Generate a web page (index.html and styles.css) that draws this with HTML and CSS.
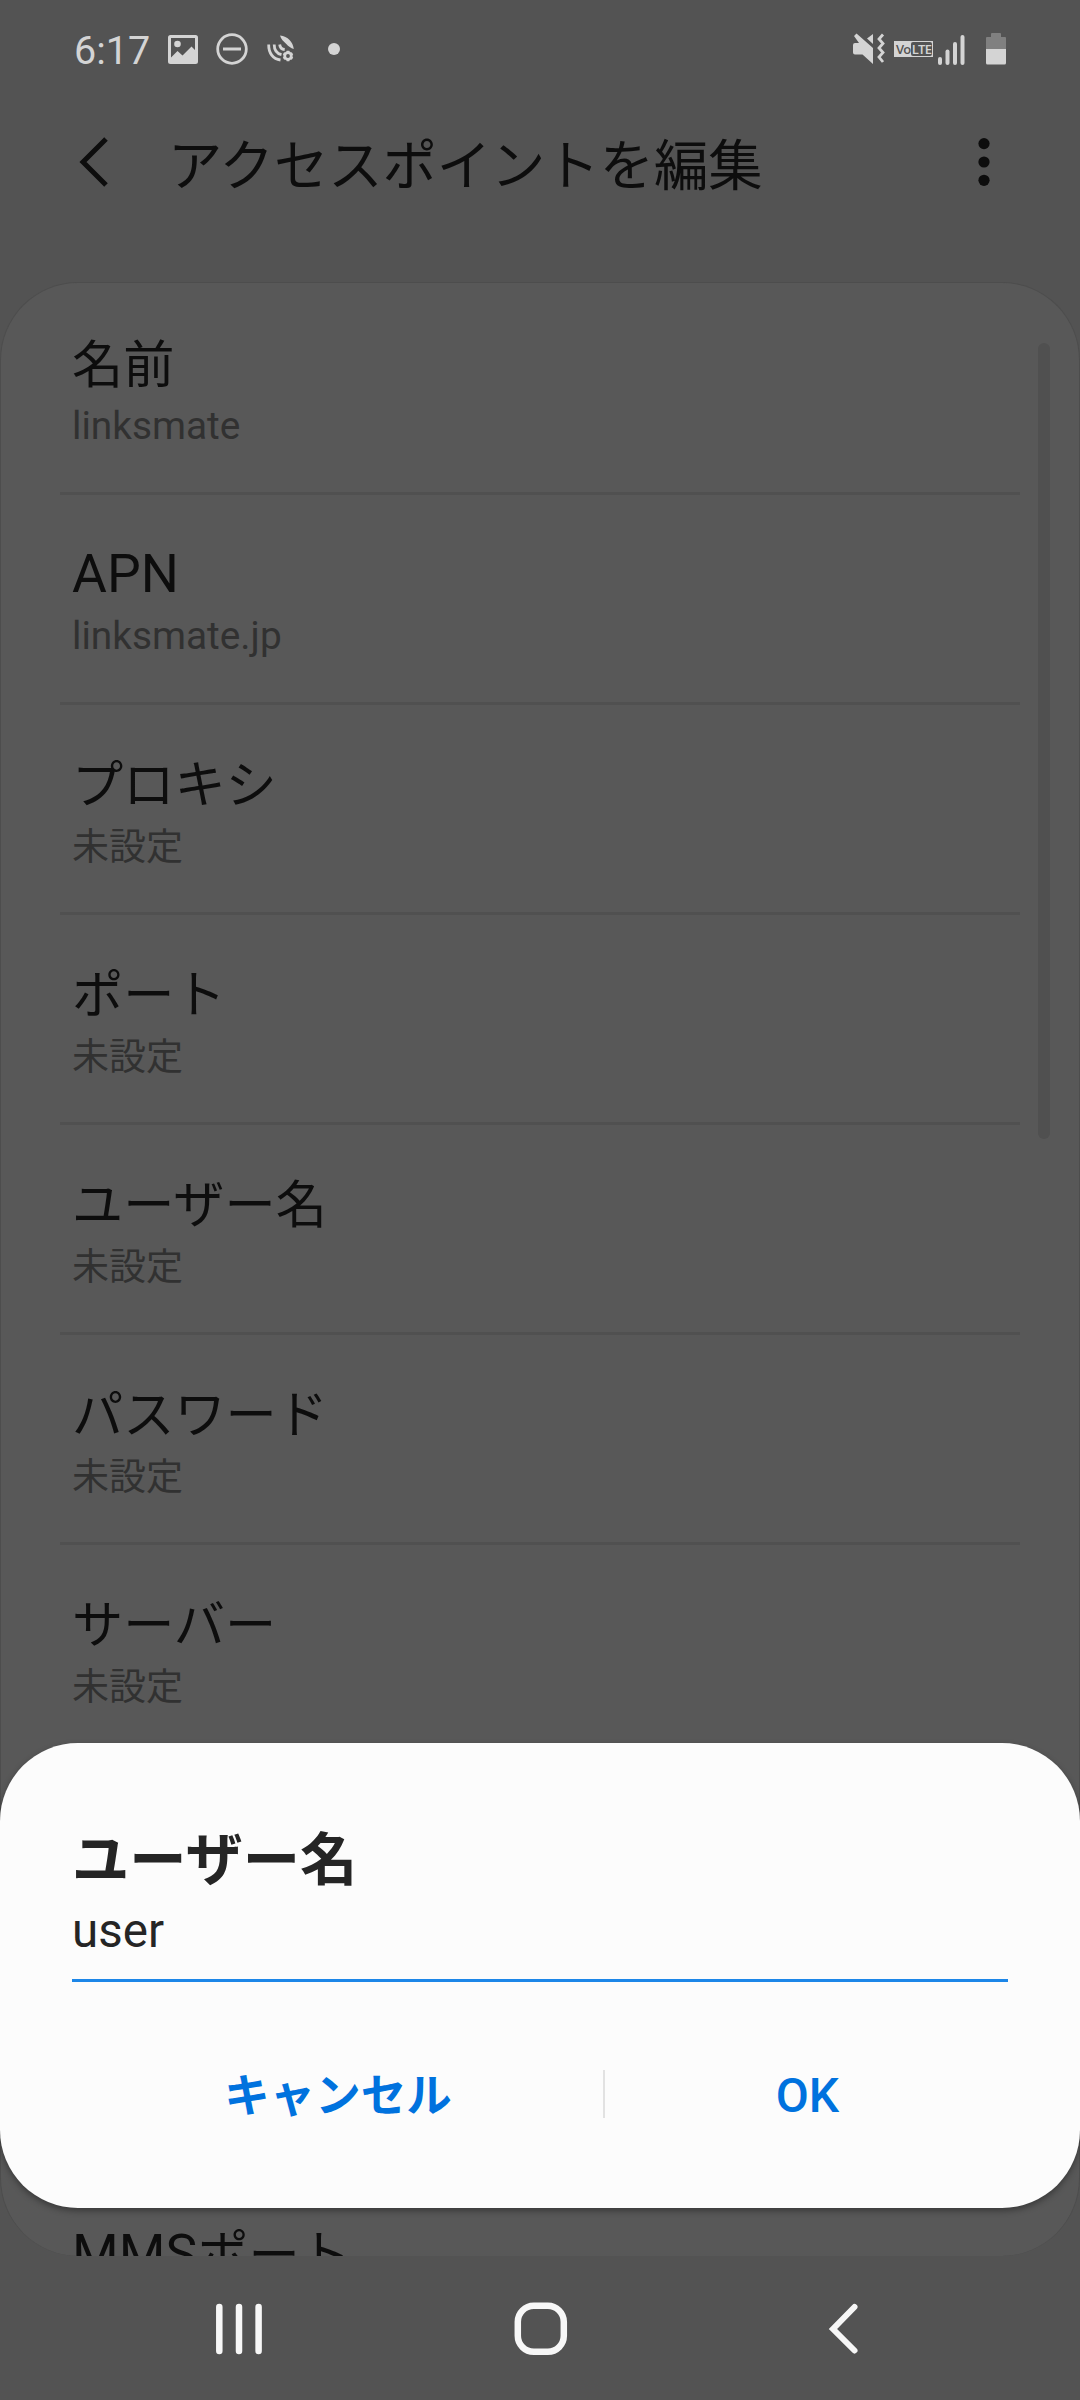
FILE: index.html
```html
<!DOCTYPE html>
<html lang="ja">
<head>
<meta charset="utf-8">
<title>アクセスポイントを編集</title>
<link rel="stylesheet" href="styles.css">
</head>
<body>
<div class="phone">
  <div class="status">
    <div class="status-left">
      <span class="clock">6:17</span>
      <svg class="ic-picture" width="30" height="30" viewBox="0 0 30 30"><path fill-rule="evenodd" d="M2.500 0h25A2.500 2.500 0 0 1 30 2.500v24a2.500 2.500 0 0 1-2.500 2.500h-25A2.500 2.500 0 0 1 0 26.500v-24A2.500 2.500 0 0 1 2.500 0zM3 3v19.500l6.500-6.500 5 4.500 9-9L27 15V3z"/><circle cx="9.500" cy="9" r="3.300"/></svg>
      <svg class="ic-dnd" width="32" height="32" viewBox="0 0 32 32"><circle class="line" cx="16" cy="16" r="14.300"/><path d="M7 14.500h18v3H7z"/></svg>
      <svg class="ic-sync" width="28" height="28" viewBox="0 0 28 28"><path d="M13 .5C21 1.500 26 7 26.800 14c-3-1-5.300-2.400-7.500-5C16.500 6.500 14 4 13 .5z"/><path class="line" d="M1.700 9.500C1.500 18 6 24 13.500 25M7.200 9.500c0 6 2.500 9 7.300 10.200M12.700 9.500c.3 3.300 1.700 4.700 5 5"/><circle class="line" cx="21" cy="21" r="3.300"/><path class="line" d="M21 15.800v2M21 24.200v2M16.500 18.400l1.700 1M23.800 22.600l1.700 1M16.500 23.600l1.700-1M23.800 19.400l1.700-1"/></svg>
      <i class="more-dot"></i>
    </div>
    <div class="status-right">
      <svg class="ic-mute" width="32" height="32" viewBox="0 0 32 32"><path d="M0 12q0-2 2-2h4L1 3l2.500-2.500L20 15v16L9.500 21.500H2q-2 0-2-2zM20 1v10l-6-5.500z"/><path class="line" d="M30 1.500l-4 4.500 4 4.500-4 4.500 4 4.500-4 4.500 4 5"/></svg>
      <div class="volte"><span>Vo</span><b>LTE</b></div>
      <svg class="ic-signal" width="28" height="30" viewBox="0 0 28 30"><rect x="0" y="22" width="4" height="8" rx="2"/><rect x="7.500" y="14.500" width="4" height="15.500" rx="2"/><rect x="15" y="7" width="4" height="23" rx="2"/><rect x="22.500" y="0" width="4" height="30" rx="2"/></svg>
      <svg class="ic-battery" width="20" height="32" viewBox="0 0 20 32"><path class="empty" d="M5 1q0-1 1-1h8q1 0 1 1v3h4q1 0 1 1v12H0V5q0-1 1-1h4z"/><path d="M0 16h20v14q0 1.500-1.500 1.500h-17Q0 31.500 0 30z"/></svg>
    </div>
  </div>

  <header class="appbar">
    <svg class="back" width="32" height="50" viewBox="0 0 32 50"><path d="M28 2L5 25l23 23"/></svg>
    <h1>アクセスポイントを編集</h1>
    <svg class="menu" width="12" height="50" viewBox="0 0 12 50"><circle cx="6" cy="6.600" r="5.600"/><circle cx="6" cy="25" r="5.600"/><circle cx="6" cy="43.300" r="5.600"/></svg>
  </header>

  <main class="card">
    <div class="row first"><div class="label"><span class="jp">名前</span></div><div class="value">linksmate</div></div>
    <div class="row"><div class="label">APN</div><div class="value">linksmate.jp</div></div>
    <div class="row"><div class="label"><span class="jp">プロキシ</span></div><div class="value"><span class="jp">未設定</span></div></div>
    <div class="row"><div class="label"><span class="jp">ポート</span></div><div class="value"><span class="jp">未設定</span></div></div>
    <div class="row"><div class="label"><span class="jp">ユーザー名</span></div><div class="value"><span class="jp">未設定</span></div></div>
    <div class="row"><div class="label"><span class="jp">パスワード</span></div><div class="value"><span class="jp">未設定</span></div></div>
    <div class="row"><div class="label"><span class="jp">サーバー</span></div><div class="value"><span class="jp">未設定</span></div></div>
    <div class="row"></div>
    <div class="row"></div>
    <div class="row"><div class="label">MMS<span class="jp">ポート</span></div></div>
    <div class="scrollbar"></div>
  </main>

  <nav class="navbar">
    <svg class="recents" width="48" height="52" viewBox="0 0 48 52"><path d="M4.300 4v44M24 4v44M43.600 4v44"/></svg>
    <svg class="home" width="54" height="54" viewBox="0 0 54 54"><rect x="3.800" y="3.800" width="46" height="46" rx="16"/></svg>
    <svg class="navback" width="32" height="54" viewBox="0 0 32 54"><path d="M27.500 5L6 27l21.500 21.500"/></svg>
  </nav>

  <section class="dialog">
    <h2>ユーザー名</h2>
    <div class="field">user</div>
    <div class="actions">
      <div class="btn cancel">キャンセル</div>
      <i class="sep"></i>
      <div class="btn ok">OK</div>
    </div>
  </section>
</div>
</body>
</html>
```
FILE: styles.css
```css
* { box-sizing: border-box; }
body {
  margin: 0;
  background: #535353;
  font-family: Roboto, "Noto Sans CJK JP", sans-serif;
}
svg { display: block; flex: none; }
h1, h2 { margin: 0; }

.phone {
  position: relative;
  display: flex;
  flex-direction: column;
  width: 1080px;
  height: 2400px;
  overflow: hidden;
  background: #535353;
}

/* status bar */
.status {
  display: flex;
  justify-content: space-between;
  height: 98px;
  padding: 0 74px 0 74px;
  color: #d4d4d4;
  fill: #d4d4d4;
}
.status-left, .status-right { display: flex; align-items: flex-start; }
.status .line { fill: none; stroke: #d4d4d4; stroke-width: 2.8; }
.clock { width: 94px; padding-top: 31px; font-size: 39.500px; line-height: 40px; }
.ic-picture { margin-top: 35px; }
.ic-dnd { margin: 33px 0 0 18px; }
.ic-sync { margin: 35px 0 0 19px; }
.more-dot { width: 12px; height: 12px; margin: 43px 0 0 33px; border-radius: 50%; background: #d4d4d4; }
.ic-mute { margin: 33px 9px 0 0; }
.volte {
  display: flex;
  width: 39px;
  height: 16px;
  margin: 41px 5px 0 0;
  padding: 1px;
  background: #d4d4d4;
  font: 600 13px/14px "Open Sans", sans-serif;
  letter-spacing: -0.8px;
}
.volte span { width: 16px; padding-left: 1px; color: #535353; }
.volte b { width: 21px; height: 14px; border-radius: 2px; background: #535353; font-weight: 600; text-align: center; }
.ic-signal { margin: 35px 20px 0 0; }
.ic-battery { margin-top: 33px; }
.ic-battery .empty { fill: #808080; }

/* title bar */
.appbar { display: flex; height: 184px; padding: 39px 90px 0 78px; }
.back path { fill: none; stroke: #0d0d0d; stroke-width: 5; }
.appbar h1 {
  flex: 1;
  padding: 3px 0 0 58px;
  color: #0d0d0d;
  font-size: 54.300px;
  font-weight: 400;
  line-height: 54px;
  white-space: nowrap;
}
.menu { fill: #0d0d0d; }

/* settings list */
.card {
  position: relative;
  height: 1974px;
  border: 1px solid #4d4d4d;
  border-bottom: 0;
  border-radius: 78px;
  background: #585858;
  overflow: hidden;
}
.row { position: relative; height: 210px; padding: 44px 72px 0 71px; }
.row.first { height: 212px; padding-top: 46px; }
.row::after {
  content: "";
  position: absolute;
  left: 59px;
  right: 59px;
  bottom: 0;
  height: 3px;
  background: #505050;
}
.label { height: 70px; color: #0d0d0d; font-size: 53.500px; line-height: 70px; white-space: nowrap; }
.value { height: 50px; margin-top: 2px; color: #313131; font-size: 38.800px; line-height: 50px; }
.jp { line-height: 1; }
.label .jp { font-size: 51.200px; vertical-align: -1px; }
.value .jp { font-size: 37px; vertical-align: -1px; }
.scrollbar {
  position: absolute;
  top: 60px;
  right: 29px;
  width: 12px;
  height: 796px;
  border-radius: 6px;
  background: #505050;
}

/* navigation bar */
.navbar { display: flex; height: 144px; padding: 47px 0 0 215px; align-items: flex-start; }
.navbar svg { fill: none; stroke: #f7f7f7; stroke-width: 6.500; stroke-linecap: round; stroke-linejoin: round; }
.navbar .navback { stroke-width: 6; stroke-linejoin: miter; }
.home { margin: -1px 0 0 251px; }
.navback { margin: -1px 0 0 259px; }

/* dialog */
.dialog {
  position: absolute;
  left: 0;
  top: 1743px;
  width: 1080px;
  height: 465px;
  padding: 81px 72px 0;
  border-radius: 78px;
  background: #fcfcfc;
  box-shadow: 0 3px 6px rgba(0, 0, 0, 0.35);
}
.dialog h2 { height: 73px; color: #252525; font-size: 57.300px; font-weight: 700; line-height: 74px; }
.field { height: 85px; border-bottom: 3px solid #1c86e8; color: #252525; font-size: 47.500px; line-height: 68px; }
.actions { display: flex; padding-top: 88px; height: 140px; color: #0072de; white-space: nowrap; }
.btn { flex: none; line-height: 52px; text-align: center; }
.cancel { width: 531px; padding: 1px 0 0 1px; font-size: 45.500px; font-weight: 700; }
.ok { width: 405px; font-size: 48px; font-weight: 500; }
.sep { flex: none; width: 2px; height: 48px; background: #e2e2e2; }
```
